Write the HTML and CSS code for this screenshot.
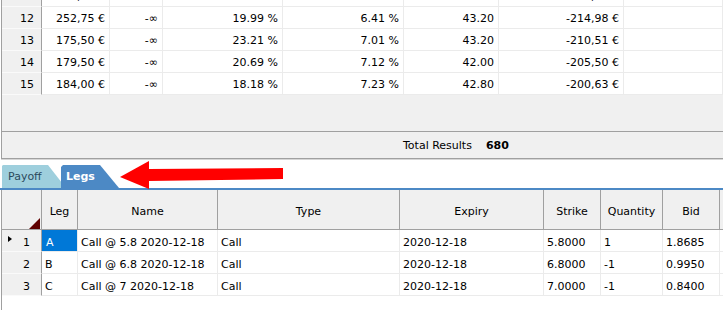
FILE: index.html
```html
<!DOCTYPE html>
<html>
<head>
<meta charset="utf-8">
<title>Legs</title>
<link rel="stylesheet" href="styles.css">
</head>
<body>
<div class="results">
  <div class="top-grid">
    <div class="trow"><div class="rh">11</div><div>247,70 €</div><div>-∞</div><div>19.73 %</div><div>6.20 %</div><div>43.20</div><div>-224,24 €</div><div></div></div>
    <div class="trow"><div class="rh">12</div><div>252,75 €</div><div>-∞</div><div>19.99 %</div><div>6.41 %</div><div>43.20</div><div>-214,98 €</div><div></div></div>
    <div class="trow"><div class="rh">13</div><div>175,50 €</div><div>-∞</div><div>23.21 %</div><div>7.01 %</div><div>43.20</div><div>-210,51 €</div><div></div></div>
    <div class="trow"><div class="rh">14</div><div>179,50 €</div><div>-∞</div><div>20.69 %</div><div>7.12 %</div><div>42.00</div><div>-205,50 €</div><div></div></div>
    <div class="trow"><div class="rh">15</div><div>184,00 €</div><div>-∞</div><div>18.18 %</div><div>7.23 %</div><div>42.80</div><div>-200,63 €</div><div></div></div>
  </div>
</div>
<div class="status"><span>Total Results</span><b>680</b></div>
<div class="tabarea">
  <div class="tabs">
    <div class="tab payoff">Payoff</div>
    <div class="tab legs">Legs</div>
  </div>
  <div class="tabline"></div>
  <svg class="arrow" width="290" height="32" viewBox="0 0 290 32">
    <polygon points="120,18 149,2 149,10 283,9 283,20 149,22 149,30" fill="#ff0000"/>
  </svg>
</div>
<div class="legs-grid">
  <div class="lhead">
    <div class="corner"><span class="tri"></span></div>
    <div>Leg</div><div>Name</div><div>Type</div><div>Expiry</div><div>Strike</div><div>Quantity</div><div>Bid</div><div></div>
  </div>
  <div class="lrow"><div class="rh"><span class="marker"></span><span>1</span></div><div class="sel">A</div><div>Call @ 5.8 2020-12-18</div><div>Call</div><div>2020-12-18</div><div>5.8000</div><div>1</div><div>1.8685</div><div></div></div>
  <div class="lrow"><div class="rh"><span></span><span>2</span></div><div>B</div><div>Call @ 6.8 2020-12-18</div><div>Call</div><div>2020-12-18</div><div>6.8000</div><div>-1</div><div>0.9950</div><div></div></div>
  <div class="lrow"><div class="rh"><span></span><span>3</span></div><div>C</div><div>Call @ 7 2020-12-18</div><div>Call</div><div>2020-12-18</div><div>7.0000</div><div>-1</div><div>0.8400</div><div></div></div>
</div>
</body>
</html>
```
FILE: styles.css
```css
* { box-sizing: border-box; }
html, body {
  margin: 0;
  padding: 0;
}
body {
  width: 723px;
  height: 310px;
  overflow: hidden;
  background: #fff;
  color: #000;
  font: 11px "DejaVu Sans", sans-serif;
}

/* top results grid */
.results {
  height: 131px;
  overflow: hidden;
  background: #f0f0f0;
  margin-left: 1px;
  border-left: 1px solid #a0a0a0;
}
.top-grid { margin-top: -15px; }
.trow {
  display: grid;
  grid-template-columns: 40px 68px 53px 120px 121px 95px 125px 1fr;
  height: 22px;
}
.trow > div {
  background: #fff;
  border-right: 1px solid #ebebeb;
  border-bottom: 1px solid #ebebeb;
  padding: 2px 4px 0 0;
  line-height: 19px;
  text-align: right;
  white-space: nowrap;
  overflow: hidden;
}
.trow > .rh {
  background: #f0f0f0;
  border-right-color: #a0a0a0;
  border-bottom-color: #fafafa;
  padding-right: 7px;
}

/* status bar */
.status {
  height: 28px;
  margin-left: 1px;
  border-left: 1px solid #a0a0a0;
  border-top: 1px solid #a0a0a0;
  border-bottom: 1px solid #a0a0a0;
  box-shadow: 0 1px 0 #d6d6d6;
  background: #f0f0f0;
  display: flex;
  align-items: center;
  gap: 14px;
  padding-left: 401px;
}
.status b { font-weight: bold; }

/* tabs */
.tabarea {
  position: relative;
  height: 31px;
  padding-top: 6px;
}
.tabs {
  display: flex;
  height: 23px;
  padding-left: 2px;
}
.tab {
  height: 23px;
  line-height: 23px;
  white-space: nowrap;
}
.payoff {
  width: 64px;
  background: #9ecfdd;
  color: #2c4a5c;
  padding-left: 6px;
  clip-path: polygon(0 1px, 1px 0, 46px 0, 64px 100%, 0 100%);
}
.legs {
  width: 58px;
  margin-left: -5px;
  background: #4c89c5;
  color: #fff;
  font-weight: bold;
  padding-left: 5px;
  clip-path: polygon(0 2px, 2px 0, 39px 0, 58px 100%, 0 100%);
}
.tabline {
  height: 2px;
  background: #4c89c5;
}
.arrow {
  position: absolute;
  left: 0;
  top: 0;
  pointer-events: none;
}

/* legs grid */
.legs-grid {
  height: 120px;
  margin-left: 1px;
  border-left: 1px solid #a0a0a0;
  background: #fff;
}
.lhead, .lrow {
  display: grid;
  grid-template-columns: 40px 36px 140px 182px 144px 57px 62px 57px 1fr;
}
.lhead {
  height: 40px;
  background: #f0f0f0;
  border-bottom: 1px solid #a0a0a0;
}
.lhead > div {
  border-right: 1px solid #a0a0a0;
  text-align: center;
  padding-top: 6px;
  line-height: 32px;
  white-space: nowrap;
  overflow: hidden;
}
.lhead > div:last-child { border-right: none; }
.lhead > .corner {
  display: flex;
  justify-content: flex-end;
  align-items: flex-end;
  padding: 0 1px 0 0;
}
.tri {
  width: 11px;
  height: 11px;
  background: #5e0000;
  clip-path: polygon(100% 0, 100% 100%, 0 100%);
}
.lrow { height: 22px; }
.lrow > div {
  border-right: 1px solid #ebebeb;
  border-bottom: 1px solid #ebebeb;
  padding: 4px 0 0 3px;
  line-height: 17px;
  white-space: nowrap;
  overflow: hidden;
}
.lrow > .rh {
  background: #f0f0f0;
  border-right-color: #a0a0a0;
  border-bottom-color: #fafafa;
  display: flex;
  justify-content: space-between;
  align-items: flex-start;
  padding: 4px 11px 0 6px;
}
.marker {
  width: 0;
  height: 0;
  margin-top: 2px;
  border-left: 4px solid #000;
  border-top: 3.5px solid transparent;
  border-bottom: 3.5px solid transparent;
}
.lrow > .sel {
  background: #0078d7;
  color: #fff;
  padding-left: 4px;
}
```
